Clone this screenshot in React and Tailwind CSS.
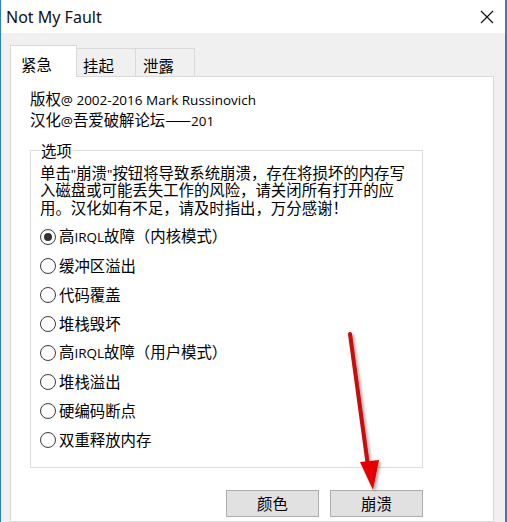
import React from 'react';

// Not My Fault — "紧急" tab of the crash dialog

// latin runs are drawn smaller, like YaHei's latin next to its CJK glyphs
const L = ({ children }) => (
  <span className="font-['Open_Sans',sans-serif] text-[13.5px] leading-none">{children}</span>
);

const OPTIONS = [
  <>高<L>IRQL</L>故障（内核模式）</>,
  '缓冲区溢出',
  '代码覆盖',
  '堆栈毁坏',
  <>高<L>IRQL</L>故障（用户模式）</>,
  '堆栈溢出',
  '硬编码断点',
  '双重释放内存',
];

const Radio = ({ checked, label }) => (
  <div className="flex items-center h-[29px]">
    <span className="w-[16px] h-[16px] rounded-full border border-[#3a3a3a] bg-white flex items-center justify-center shrink-0">
      {checked && <span className="w-[8px] h-[8px] rounded-full bg-[#333]" />}
    </span>
    <span className="ml-[3px] text-[15.4px] text-black leading-none">{label}</span>
  </div>
);

const Tab = ({ label, active, className }) => (
  <div
    className={
      active
        ? 'h-[32px] bg-white border border-b-0 border-[#d9d9d9] relative z-10 -mb-px pt-[6px] ' + className
        : 'h-[28px] bg-[#f0f0f0] border border-b-0 border-l-0 border-[#d9d9d9] pt-[4px] ' + className
    }
  >
    <span className="text-[15.4px] leading-[20px] text-black">{label}</span>
  </div>
);

const Button = ({ children }) => (
  <button className="w-[93px] h-[27px] bg-[#e1e1e1] border border-[#adadad] text-[15.4px] text-black leading-none">
    {children}
  </button>
);

export default function App() {
  return (
    <div className="w-[507px] h-[522px] overflow-hidden relative bg-[#f0f0f0] border-l border-r-2 border-[#2a7fd0] flex flex-col font-['Noto_Sans_CJK_SC','Noto_Sans',sans-serif]">
      {/* title bar */}
      <div className="h-[33px] bg-white flex items-center justify-between pl-[5px] pr-[11px] shrink-0">
        <span className="text-[16px] text-[#111] font-['Noto_Sans',sans-serif]">Not My Fault</span>
        <svg width="14" height="14" viewBox="0 0 14 14">
          <path d="M1 1 L13 13 M13 1 L1 13" stroke="#111" strokeWidth="1.2" />
        </svg>
      </div>

      <div className="flex-1 pl-[9px] pr-[11px] pt-[12px] flex flex-col">
        {/* tabs */}
        <div className="flex items-end h-[31px]">
          <Tab label="紧急" active className="w-[67px] pl-[10px]" />
          <Tab label="挂起" className="w-[59px] pl-[6px]" />
          <Tab label="泄露" className="w-[59px] pl-[7px]" />
        </div>

        {/* tab page */}
        <div className="flex-1 bg-white border border-[#d9d9d9] pl-[19px] pt-[11px]">
          <div className="text-[15.4px] leading-[21px] text-black">
            <div>版权<L>@ 2002-2016 Mark Russinovich</L></div>
            <div>汉化<L>@</L>吾爱破解论坛——<L>201</L></div>
          </div>

          <fieldset className="w-[393px] mt-[10px] border border-[#dcdcdc] pl-[9px] pr-[6px] pb-[13px]">
            <legend className="px-[1px] text-[15.4px] leading-[20px] text-black">选项</legend>
            <p className="mt-[3.5px] mb-[6px] text-[15.4px] leading-[17.5px] text-black whitespace-nowrap">
              单击<L>"</L>崩溃<L>"</L>按钮将导致系统崩溃，存在将损坏的内存写
              <br />
              入磁盘或可能丢失工作的风险，请关闭所有打开的应
              <br />
              用。汉化如有不足，请及时指出，万分感谢！
            </p>
            {OPTIONS.map((o, i) => (
              <Radio key={i} label={o} checked={i === 0} />
            ))}
          </fieldset>

          <div className="w-[393px] flex justify-end gap-[11px] mt-[22px]">
            <Button>颜色</Button>
            <Button>崩溃</Button>
          </div>
        </div>
      </div>

      {/* red annotation arrow */}
      <svg className="absolute left-0 top-0 pointer-events-none" width="507" height="522">
        <defs>
          <filter id="sh" x="-50%" y="-10%" width="200%" height="120%">
            <feDropShadow dx="2" dy="2" stdDeviation="1.5" floodColor="#000" floodOpacity="0.35" />
          </filter>
        </defs>
        <g filter="url(#sh)">
          <line x1="349" y1="334" x2="367" y2="466" stroke="#c80808" strokeWidth="4" strokeLinecap="round" />
          <polygon points="372,490 359,462 378,460" fill="#e40000" />
        </g>
      </svg>
    </div>
  );
}
